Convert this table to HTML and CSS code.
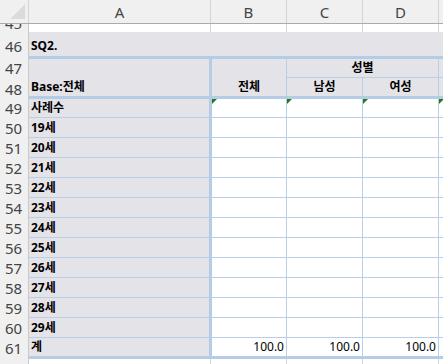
FILE: index.html
```html
<!DOCTYPE html>
<html lang="ko">
<head>
<meta charset="utf-8">
<title>Sheet</title>
<link rel="stylesheet" href="styles.css">
</head>
<body>
<div class="sheet">
  <div class="colhead">
    <div class="corner">
      <svg width="28" height="23" viewBox="0 0 28 23"><polygon points="10,19 25,19 25,4" fill="#DBDBDB"/></svg>
    </div>
    <div class="ch ch-a">A</div>
    <div class="ch ch-n">B</div>
    <div class="ch ch-n">C</div>
    <div class="ch ch-n">D</div>
    <div class="ch ch-e"></div>
  </div>
  <div class="body">
    <div class="rownums">
      <div class="rn rn-45"><span>45</span></div>
      <div class="rn rn-46"><span>46</span></div>
      <div class="rn rn-47"><span>47</span></div>
      <div class="rn rn-48"><span>48</span></div>
      <div class="rn rn-49"><span>49</span></div>
      <div class="rn"><span>50</span></div>
      <div class="rn"><span>51</span></div>
      <div class="rn"><span>52</span></div>
      <div class="rn"><span>53</span></div>
      <div class="rn"><span>54</span></div>
      <div class="rn"><span>55</span></div>
      <div class="rn"><span>56</span></div>
      <div class="rn"><span>57</span></div>
      <div class="rn"><span>58</span></div>
      <div class="rn"><span>59</span></div>
      <div class="rn"><span>60</span></div>
      <div class="rn rn-61"><span>61</span></div>
      <div class="rn rn-62"><span>62</span></div>
    </div>
    <div class="grid">
      <div class="wrow r45">
        <div class="wc wa"></div><div class="wc wn"></div><div class="wc wn"></div><div class="wc wn"></div><div class="wc we"></div>
      </div>
      <div class="r46"><span class="lbl">SQ2.</span></div>
      <div class="block">
        <div class="bc ba"><span class="lbl">Base:전체</span></div>
        <div class="bc bb"><span class="lbl">전체</span></div>
        <div class="bgroup">
          <div class="btop"><span class="lbl">성별</span></div>
          <div class="bbot">
            <div class="bsub bsub-c"><span class="lbl">남성</span></div>
            <div class="bsub bsub-d"><span class="lbl">여성</span></div>
          </div>
        </div>
        <div class="bgroup be">
          <div class="btop"></div>
          <div class="bbot"></div>
        </div>
      </div>
      <div class="drow first">
        <div class="dc da"><span class="lbl">사례수</span></div>
        <div class="dc db flag"></div><div class="dc dn flag"></div><div class="dc dn flag"></div><div class="dc de flag"></div>
      </div>
      <div class="drow">
        <div class="dc da"><span class="lbl">19세</span></div>
        <div class="dc db"></div><div class="dc dn"></div><div class="dc dn"></div><div class="dc de"></div>
      </div>
      <div class="drow">
        <div class="dc da"><span class="lbl">20세</span></div>
        <div class="dc db"></div><div class="dc dn"></div><div class="dc dn"></div><div class="dc de"></div>
      </div>
      <div class="drow">
        <div class="dc da"><span class="lbl">21세</span></div>
        <div class="dc db"></div><div class="dc dn"></div><div class="dc dn"></div><div class="dc de"></div>
      </div>
      <div class="drow">
        <div class="dc da"><span class="lbl">22세</span></div>
        <div class="dc db"></div><div class="dc dn"></div><div class="dc dn"></div><div class="dc de"></div>
      </div>
      <div class="drow">
        <div class="dc da"><span class="lbl">23세</span></div>
        <div class="dc db"></div><div class="dc dn"></div><div class="dc dn"></div><div class="dc de"></div>
      </div>
      <div class="drow">
        <div class="dc da"><span class="lbl">24세</span></div>
        <div class="dc db"></div><div class="dc dn"></div><div class="dc dn"></div><div class="dc de"></div>
      </div>
      <div class="drow">
        <div class="dc da"><span class="lbl">25세</span></div>
        <div class="dc db"></div><div class="dc dn"></div><div class="dc dn"></div><div class="dc de"></div>
      </div>
      <div class="drow">
        <div class="dc da"><span class="lbl">26세</span></div>
        <div class="dc db"></div><div class="dc dn"></div><div class="dc dn"></div><div class="dc de"></div>
      </div>
      <div class="drow">
        <div class="dc da"><span class="lbl">27세</span></div>
        <div class="dc db"></div><div class="dc dn"></div><div class="dc dn"></div><div class="dc de"></div>
      </div>
      <div class="drow">
        <div class="dc da"><span class="lbl">28세</span></div>
        <div class="dc db"></div><div class="dc dn"></div><div class="dc dn"></div><div class="dc de"></div>
      </div>
      <div class="drow">
        <div class="dc da"><span class="lbl">29세</span></div>
        <div class="dc db"></div><div class="dc dn"></div><div class="dc dn"></div><div class="dc de"></div>
      </div>
      <div class="drow last">
        <div class="dc da"><span class="lbl">계</span></div>
        <div class="dc db num"><span class="val">100.0</span></div>
        <div class="dc dn num"><span class="val">100.0</span></div>
        <div class="dc dn num"><span class="val">100.0</span></div>
        <div class="dc de"></div>
      </div>
      <div class="wrow r62">
        <div class="wc wa"></div><div class="wc wn"></div><div class="wc wn"></div><div class="wc wn"></div><div class="wc we"></div>
      </div>
    </div>
  </div>
</div>
</body>
</html>
```

FILE: styles.css
```css
* { box-sizing: border-box; }
html, body { margin: 0; padding: 0; background: #ffffff; }
body { font-family: "Noto Sans", "Noto Sans CJK KR", sans-serif; }

.sheet {
  width: 443px;
  height: 364px;
  overflow: hidden;
  display: flex;
  flex-direction: column;
}

/* column header */
.colhead {
  display: flex;
  height: 24px;
  flex: none;
  background: #F0F0F0;
  border-bottom: 1px solid #ABABAB;
}
.corner {
  width: 29px;
  border-right: 1px solid #D4D4D4;
  display: flex;
}
.ch {
  display: flex;
  align-items: center;
  justify-content: center;
  font-size: 15px;
  line-height: 15px;
  color: #444444;
  border-right: 1px solid #D4D4D4;
  padding-top: 1px;
}
.ch-a { width: 182px; }
.ch-n { width: 76px; }
.ch-e { flex: 1; border-right: none; }

.body {
  display: flex;
  flex: 1;
  min-height: 0;
}

/* row numbers */
.rownums {
  width: 29px;
  flex: none;
  background: #F0F0F0;
  border-right: 1px solid #C9C9C9;
  display: flex;
  flex-direction: column;
}
.rn {
  height: 20px;
  flex: none;
  overflow: hidden;
  display: flex;
  align-items: center;
  justify-content: center;
  font-size: 15px;
  line-height: 15px;
  color: #444444;
  padding-right: 1px;
}
.rn span { display: block; }
.rn-45 { height: 8px; align-items: flex-end; }
.rn-45 span { height: 20px; line-height: 20px; padding-top: 1px; }
.rn-46 { height: 24px; padding-top: 4px; }
.rn-47 { height: 22px; padding-top: 3px; }
.rn-48 { height: 21px; padding-top: 2px; }
.rn-49 { height: 19px; }
.rn-61 { height: 21px; }
.rn-62 { flex: 1; align-items: flex-start; }
.rn-62 span { height: 20px; line-height: 20px; padding-top: 1px; }

/* grid */
.grid {
  flex: 1;
  display: flex;
  flex-direction: column;
  min-width: 0;
}
.lbl {
  font-size: 12px;
  line-height: 12px;
  font-weight: 700;
  color: #000000;
  white-space: nowrap;
}
.val {
  font-size: 12px;
  line-height: 12px;
  color: #000000;
}

.wrow { display: flex; flex: none; background: #ffffff; }
.r45 { height: 8px; }
.r62 { flex: 1; }
.wc { border-right: 1px solid #D4D4D4; }
.wa { width: 182px; }
.wn { width: 76px; }
.we { flex: 1; border-right: none; }

.r46 {
  height: 24px;
  flex: none;
  background: #E4E3E8;
  display: flex;
  align-items: flex-end;
  padding: 0 0 4px 2px;
}

/* header block rows 47-48 */
.block {
  height: 43px;
  flex: none;
  display: flex;
  background: #E4E3E8;
  border-top: 3px solid #B4CCE6;
  border-bottom: 3px solid #B4CCE6;
}
.bc {
  display: flex;
  align-items: flex-end;
  padding-bottom: 3px;
}
.ba { width: 180px; padding-left: 2px; }
.bb {
  width: 78px;
  justify-content: center;
  border-left: 3px solid #B4CCE6;
  border-right: 1px solid #B8CFE7;
}
.bgroup {
  width: 152px;
  display: flex;
  flex-direction: column;
  border-right: 1px solid #B8CFE7;
}
.be { flex: 1; width: auto; border-right: none; }
.btop {
  height: 19px;
  border-bottom: 1px solid #B8CFE7;
  display: flex;
  align-items: flex-end;
  justify-content: center;
  padding-bottom: 3px;
}
.bbot { flex: 1; display: flex; }
.bsub {
  display: flex;
  align-items: flex-end;
  justify-content: center;
  padding-bottom: 3px;
}
.bsub-c { width: 76px; border-right: 1px solid #B8CFE7; }
.bsub-d { flex: 1; }

/* data rows */
.drow { display: flex; height: 20px; flex: none; }
.drow.first { height: 19px; }
.drow.last { height: 21px; }
.dc {
  border-bottom: 1px solid #B8CFE7;
  display: flex;
  align-items: flex-end;
  padding-bottom: 3px;
  background: #ffffff;
}
.drow.last .dc { border-bottom: 3px solid #B4CCE6; padding-bottom: 3px; }
.da { width: 180px; background: #E4E3E8; padding-left: 2px; }
.db {
  width: 78px;
  border-left: 3px solid #B4CCE6;
  border-right: 1px solid #B8CFE7;
}
.dn { width: 76px; border-right: 1px solid #B8CFE7; }
.de { flex: 1; }
.num { justify-content: flex-end; padding-right: 2px; }

.flag { position: relative; }
.flag::before {
  content: "";
  position: absolute;
  left: 0;
  top: 0;
  border-top: 5px solid #1E7B1E;
  border-right: 5px solid transparent;
}
```
